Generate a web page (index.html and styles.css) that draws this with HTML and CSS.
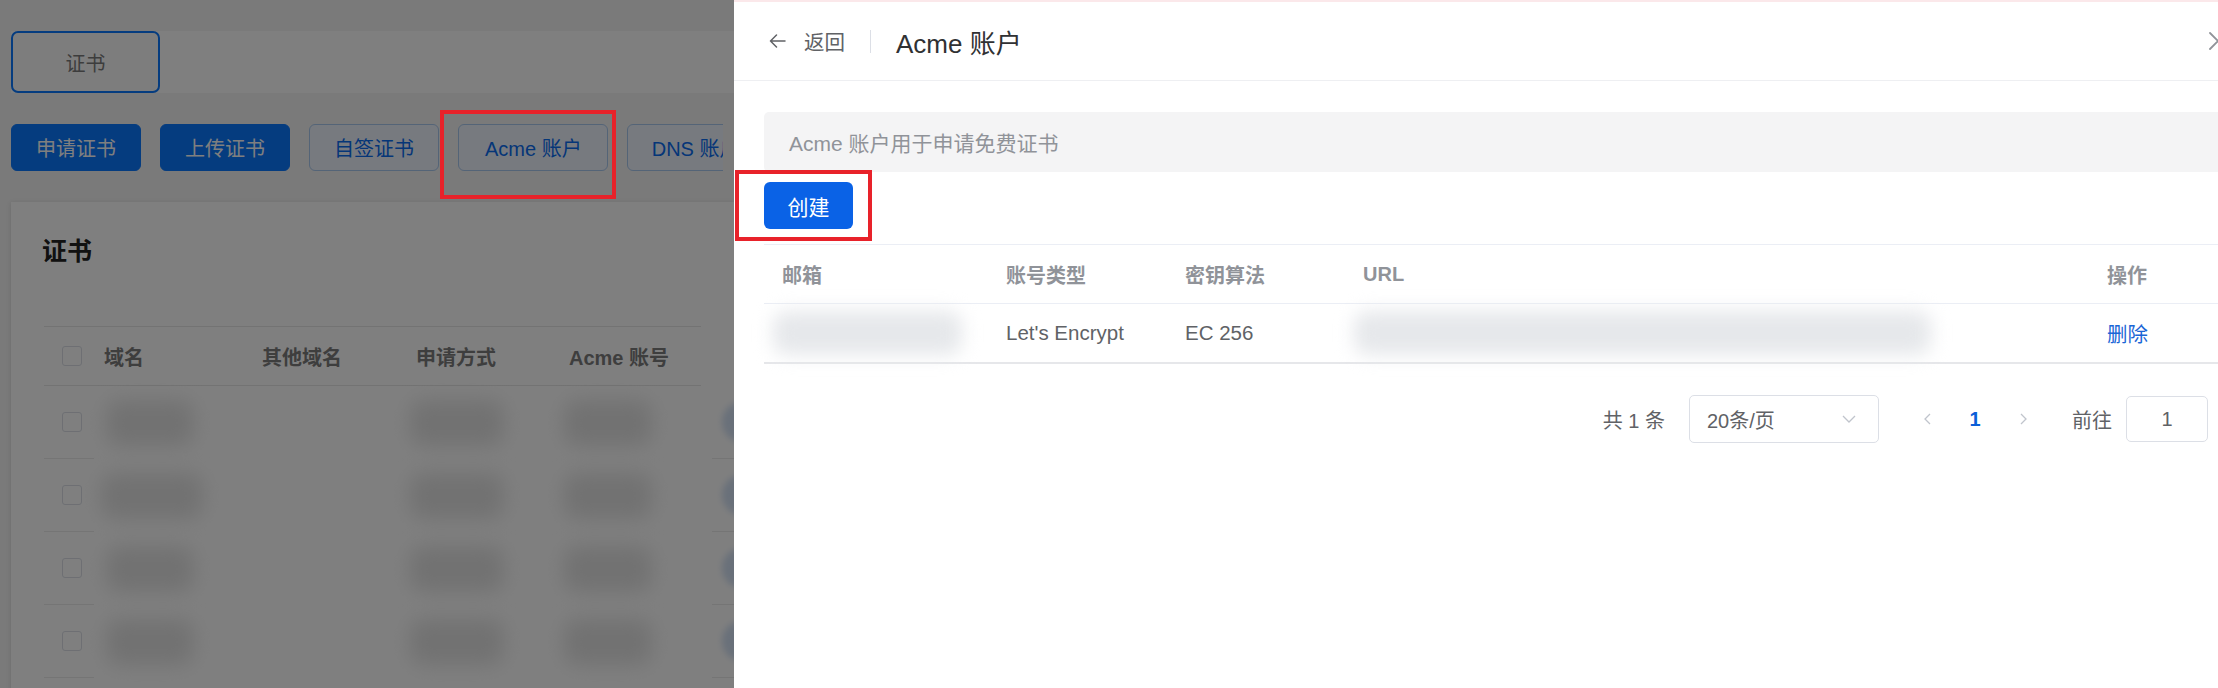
FILE: index.html
```html
<!DOCTYPE html>
<html lang="zh-CN">
<head>
<meta charset="utf-8">
<title>证书 - Acme 账户</title>
<link rel="stylesheet" href="styles.css">
</head>
<body>
<div class="page">
  <div class="tabbar"><div class="tab">证书</div></div>
  <div class="actions">
    <button class="btn primary">申请证书</button>
    <button class="btn primary">上传证书</button>
    <button class="btn plain">自签证书</button>
    <button class="btn plain wide">Acme 账户</button>
    <button class="btn plain">DNS 账户</button>
  </div>
  <section class="card">
    <h2 class="card-title">证书</h2>
    <div class="ltable">
      <div class="lrow lhead">
        <div class="lc ck"><span class="checkbox"></span></div>
        <div class="lc">域名</div>
        <div class="lc">其他域名</div>
        <div class="lc">申请方式</div>
        <div class="lc">Acme 账号</div>
        <div class="lc">状</div>
      </div>
      <div class="lrow lbody">
        <div class="lc ck line"><span class="checkbox"></span></div>
        <div class="lc"><span class="blob b-dom"></span></div>
        <div class="lc"></div>
        <div class="lc"><span class="blob b-way"></span></div>
        <div class="lc"><span class="blob b-acc"></span></div>
        <div class="lc line"><span class="tag"></span></div>
      </div>
      <div class="lrow lbody">
        <div class="lc ck line"><span class="checkbox"></span></div>
        <div class="lc"><span class="blob b-dom wide"></span></div>
        <div class="lc"></div>
        <div class="lc"><span class="blob b-way"></span></div>
        <div class="lc"><span class="blob b-acc"></span></div>
        <div class="lc line"><span class="tag"></span></div>
      </div>
      <div class="lrow lbody">
        <div class="lc ck line"><span class="checkbox"></span></div>
        <div class="lc"><span class="blob b-dom"></span></div>
        <div class="lc"></div>
        <div class="lc"><span class="blob b-way"></span></div>
        <div class="lc"><span class="blob b-acc"></span></div>
        <div class="lc line"><span class="tag"></span></div>
      </div>
      <div class="lrow lbody">
        <div class="lc ck line"><span class="checkbox"></span></div>
        <div class="lc"><span class="blob b-dom"></span></div>
        <div class="lc"></div>
        <div class="lc"><span class="blob b-way"></span></div>
        <div class="lc"><span class="blob b-acc"></span></div>
        <div class="lc line"><span class="tag"></span></div>
      </div>
    </div>
  </section>
</div>

<div class="mask"></div>

<aside class="drawer">
  <header class="dheader">
    <span class="back">
      <svg width="17" height="14" viewBox="0 0 17 14" fill="none" stroke="#606266" stroke-width="1.5" stroke-linecap="round" stroke-linejoin="round"><path d="M16 7H1.5M7.5 1L1.5 7l6 6"/></svg>
      <span class="back-text">返回</span>
    </span>
    <span class="sep"></span>
    <span class="dtitle">Acme 账户</span>
    <span class="close">
      <svg width="18" height="18" viewBox="0 0 18 18" fill="none" stroke="#909399" stroke-width="1.8" stroke-linecap="round"><path d="M1 1L17 17M17 1L1 17"/></svg>
    </span>
  </header>
  <div class="dbody">
    <div class="alert">Acme 账户用于申请免费证书</div>
    <button class="create">创建</button>
    <div class="dtable">
      <div class="drow dhead">
        <div class="dc">邮箱</div>
        <div class="dc">账号类型</div>
        <div class="dc">密钥算法</div>
        <div class="dc">URL</div>
        <div class="dc">操作</div>
      </div>
      <div class="drow dline">
        <div class="dc"><span class="dblob mail"></span></div>
        <div class="dc">Let's Encrypt</div>
        <div class="dc">EC 256</div>
        <div class="dc"><span class="dblob url"></span></div>
        <div class="dc"><a class="link">删除</a></div>
      </div>
    </div>
    <div class="pager">
      <span class="total">共 1 条</span>
      <div class="select">
        <span>20条/页</span>
        <svg width="14" height="8" viewBox="0 0 14 8" fill="none" stroke="#c0c4cc" stroke-width="1.3"><path d="M1 1l6 6 6-6"/></svg>
      </div>
      <div class="pages">
        <span class="pg"><svg width="7" height="12" viewBox="0 0 7 12" fill="none" stroke="#c0c4cc" stroke-width="1.3"><path d="M6 1L1 6l5 5"/></svg></span>
        <span class="pg active">1</span>
        <span class="pg"><svg width="7" height="12" viewBox="0 0 7 12" fill="none" stroke="#c0c4cc" stroke-width="1.3"><path d="M1 1l5 5-5 5"/></svg></span>
      </div>
      <span class="goto">前往</span>
      <div class="jump">1</div>
    </div>
  </div>
</aside>

<div class="mark mark-acme"></div>
<div class="mark mark-create"></div>
</body>
</html>
```

FILE: styles.css
```css
* { box-sizing: border-box; }

html, body {
  margin: 0;
  width: 2218px;
  height: 688px;
  overflow: hidden;
}

body {
  position: relative;
  background: #f4f4f4;
  font-family: "Liberation Sans", "Noto Sans CJK SC", sans-serif;
  color: #303133;
}

/* ---------- underlying page ---------- */
.page {
  padding-top: 31px;
}

.tabbar {
  margin-left: 11px;
  height: 62px;
  background: #ffffff;
  display: flex;
}

.tab {
  width: 149px;
  height: 62px;
  border: 2px solid #0a78ff;
  border-radius: 7px;
  background: #fbfbfb;
  display: flex;
  align-items: center;
  justify-content: center;
  font-size: 20px;
  color: #7a7a7a;
}

.actions {
  margin-top: 31px;
  padding-left: 11px;
  display: flex;
  gap: 19px;
  width: 723px;
  overflow: hidden;
}

.btn {
  flex: none;
  height: 47px;
  padding: 0 24px;
  border-radius: 6px;
  font-family: inherit;
  font-size: 20px;
  border: 1px solid transparent;
  white-space: nowrap;
}

.btn.wide {
  padding: 0 25px 0 26px;
}

.btn.primary {
  background: #0a78ff;
  color: #ffffff;
  border-color: #0a78ff;
}

.btn.plain {
  background: #eef5ff;
  color: #0a6cf0;
  border-color: #a9c8ef;
}

.card {
  margin: 31px 11px 0;
  background: #ffffff;
  box-shadow: 0 1px 5px rgba(0, 0, 0, 0.12);
  padding: 31px 33px 0;
  height: 520px;
  width: 723px;
  overflow: hidden;
}

.card-title {
  margin: 0 0 0 -2px;
  font-size: 25px;
  line-height: 36px;
  font-weight: 700;
  color: #222222;
}

.ltable {
  margin-top: 57px;
}

.lrow {
  display: grid;
  grid-template-columns: 50px 158px 154px 153px 153px 1fr;
}

.lhead {
  height: 60px;
  border-top: 1px solid #e6e6e6;
  border-bottom: 1px solid #e6e6e6;
}

.lc {
  display: flex;
  align-items: center;
  padding-left: 10px;
  font-size: 20px;
  font-weight: 700;
  color: #7c7c7c;
  white-space: nowrap;
  overflow: hidden;
}

.lc.ck {
  padding-left: 18px;
}

.lbody {
  height: 73px;
}

.lbody .lc {
  overflow: visible;
}

.lbody .line {
  border-bottom: 1px solid #ebebeb;
}

.checkbox {
  width: 20px;
  height: 20px;
  border: 1px solid #dcdfe6;
  border-radius: 3px;
  background: #ffffff;
}

.blob {
  display: block;
  height: 46px;
  border-radius: 14px;
  background: #e4e4e4;
  filter: blur(10px);
}

.b-dom { width: 88px; margin-left: 2px; }
.b-dom.wide { width: 102px; margin-left: -3px; }
.b-way { width: 94px; margin-left: -6px; }
.b-acc { width: 88px; margin-left: -5px; }

.tag {
  display: block;
  width: 70px;
  height: 40px;
  border-radius: 20px;
  background: #d3e1f4;
  filter: blur(3px);
}

.mask {
  position: absolute;
  inset: 0;
  background: rgba(0, 0, 0, 0.5);
}

/* ---------- drawer ---------- */
.drawer {
  position: absolute;
  left: 734px;
  top: 0;
  width: 1520px;
  height: 688px;
  background: #ffffff;
  border-top: 2px solid #fbe8ea;
}

.dheader {
  height: 79px;
  border-bottom: 1px solid #eeeff2;
  display: flex;
  align-items: center;
  padding: 0 27px 0 35px;
}

.back {
  display: flex;
  align-items: center;
}

.back svg {
  margin-right: 18px;
}

.back-text {
  font-size: 20.5px;
  color: #606266;
}

.sep {
  width: 1px;
  height: 23px;
  background: #dcdfe6;
  margin: 0 25px;
}

.dtitle {
  font-size: 26px;
  color: #303133;
}

.close {
  margin-left: auto;
  display: flex;
}

.dbody {
  padding: 31px 30px 0;
}

.alert {
  height: 60px;
  background: #f4f4f5;
  border-radius: 5px;
  padding-left: 25px;
  display: flex;
  align-items: center;
  font-size: 21px;
  color: #909399;
}

.create {
  display: block;
  margin-top: 10px;
  width: 89px;
  height: 47px;
  border: none;
  border-radius: 6px;
  background: #0a62e6;
  color: #ffffff;
  font-family: inherit;
  font-size: 21px;
}

.dtable {
  margin-top: 15px;
}

.drow {
  display: grid;
  grid-template-columns: 224px 179px 178px 744px 1fr;
}

.dhead {
  height: 60px;
  border-top: 1px solid #ebeef5;
  border-bottom: 1px solid #ebeef5;
}

.dline {
  height: 60px;
  border-bottom: 2px solid #e6e7ea;
}

.dc {
  display: flex;
  align-items: center;
  padding-left: 18px;
  font-size: 20.5px;
  color: #606266;
  white-space: nowrap;
}

.dhead .dc {
  font-size: 20px;
  font-weight: 700;
  color: #909399;
}

.dblob {
  display: block;
  height: 44px;
  border-radius: 14px;
  background: #e6e8eb;
  filter: blur(9px);
  margin-left: -9px;
}

.dblob.mail { width: 189px; }
.dblob.url { width: 577px; }

.link {
  color: #1a66d6;
  cursor: pointer;
}

.pager {
  margin-top: 31px;
  height: 48px;
  display: flex;
  justify-content: flex-end;
  align-items: center;
  padding-right: 16px;
  font-size: 20px;
  color: #606266;
}

.total {
  margin-right: 24px;
}

.select {
  width: 190px;
  height: 48px;
  border: 1px solid #dcdfe6;
  border-radius: 5px;
  padding: 0 22px 0 17px;
  display: flex;
  align-items: center;
  justify-content: space-between;
}

.pages {
  margin-left: 24px;
  display: flex;
}

.pg {
  width: 48px;
  height: 48px;
  display: flex;
  align-items: center;
  justify-content: center;
}

.pg.active {
  color: #0a5fd8;
  font-weight: 700;
}

.goto {
  margin-left: 25px;
}

.jump {
  margin-left: 14px;
  width: 82px;
  height: 46px;
  border: 1px solid #dcdfe6;
  border-radius: 5px;
  display: flex;
  align-items: center;
  justify-content: center;
}

/* ---------- annotation marks ---------- */
.mark {
  position: absolute;
  border: 4px solid #e8222a;
}

.mark-acme {
  left: 440px;
  top: 110px;
  width: 176px;
  height: 89px;
}

.mark-create {
  left: 735px;
  top: 170px;
  width: 137px;
  height: 71px;
}
```
